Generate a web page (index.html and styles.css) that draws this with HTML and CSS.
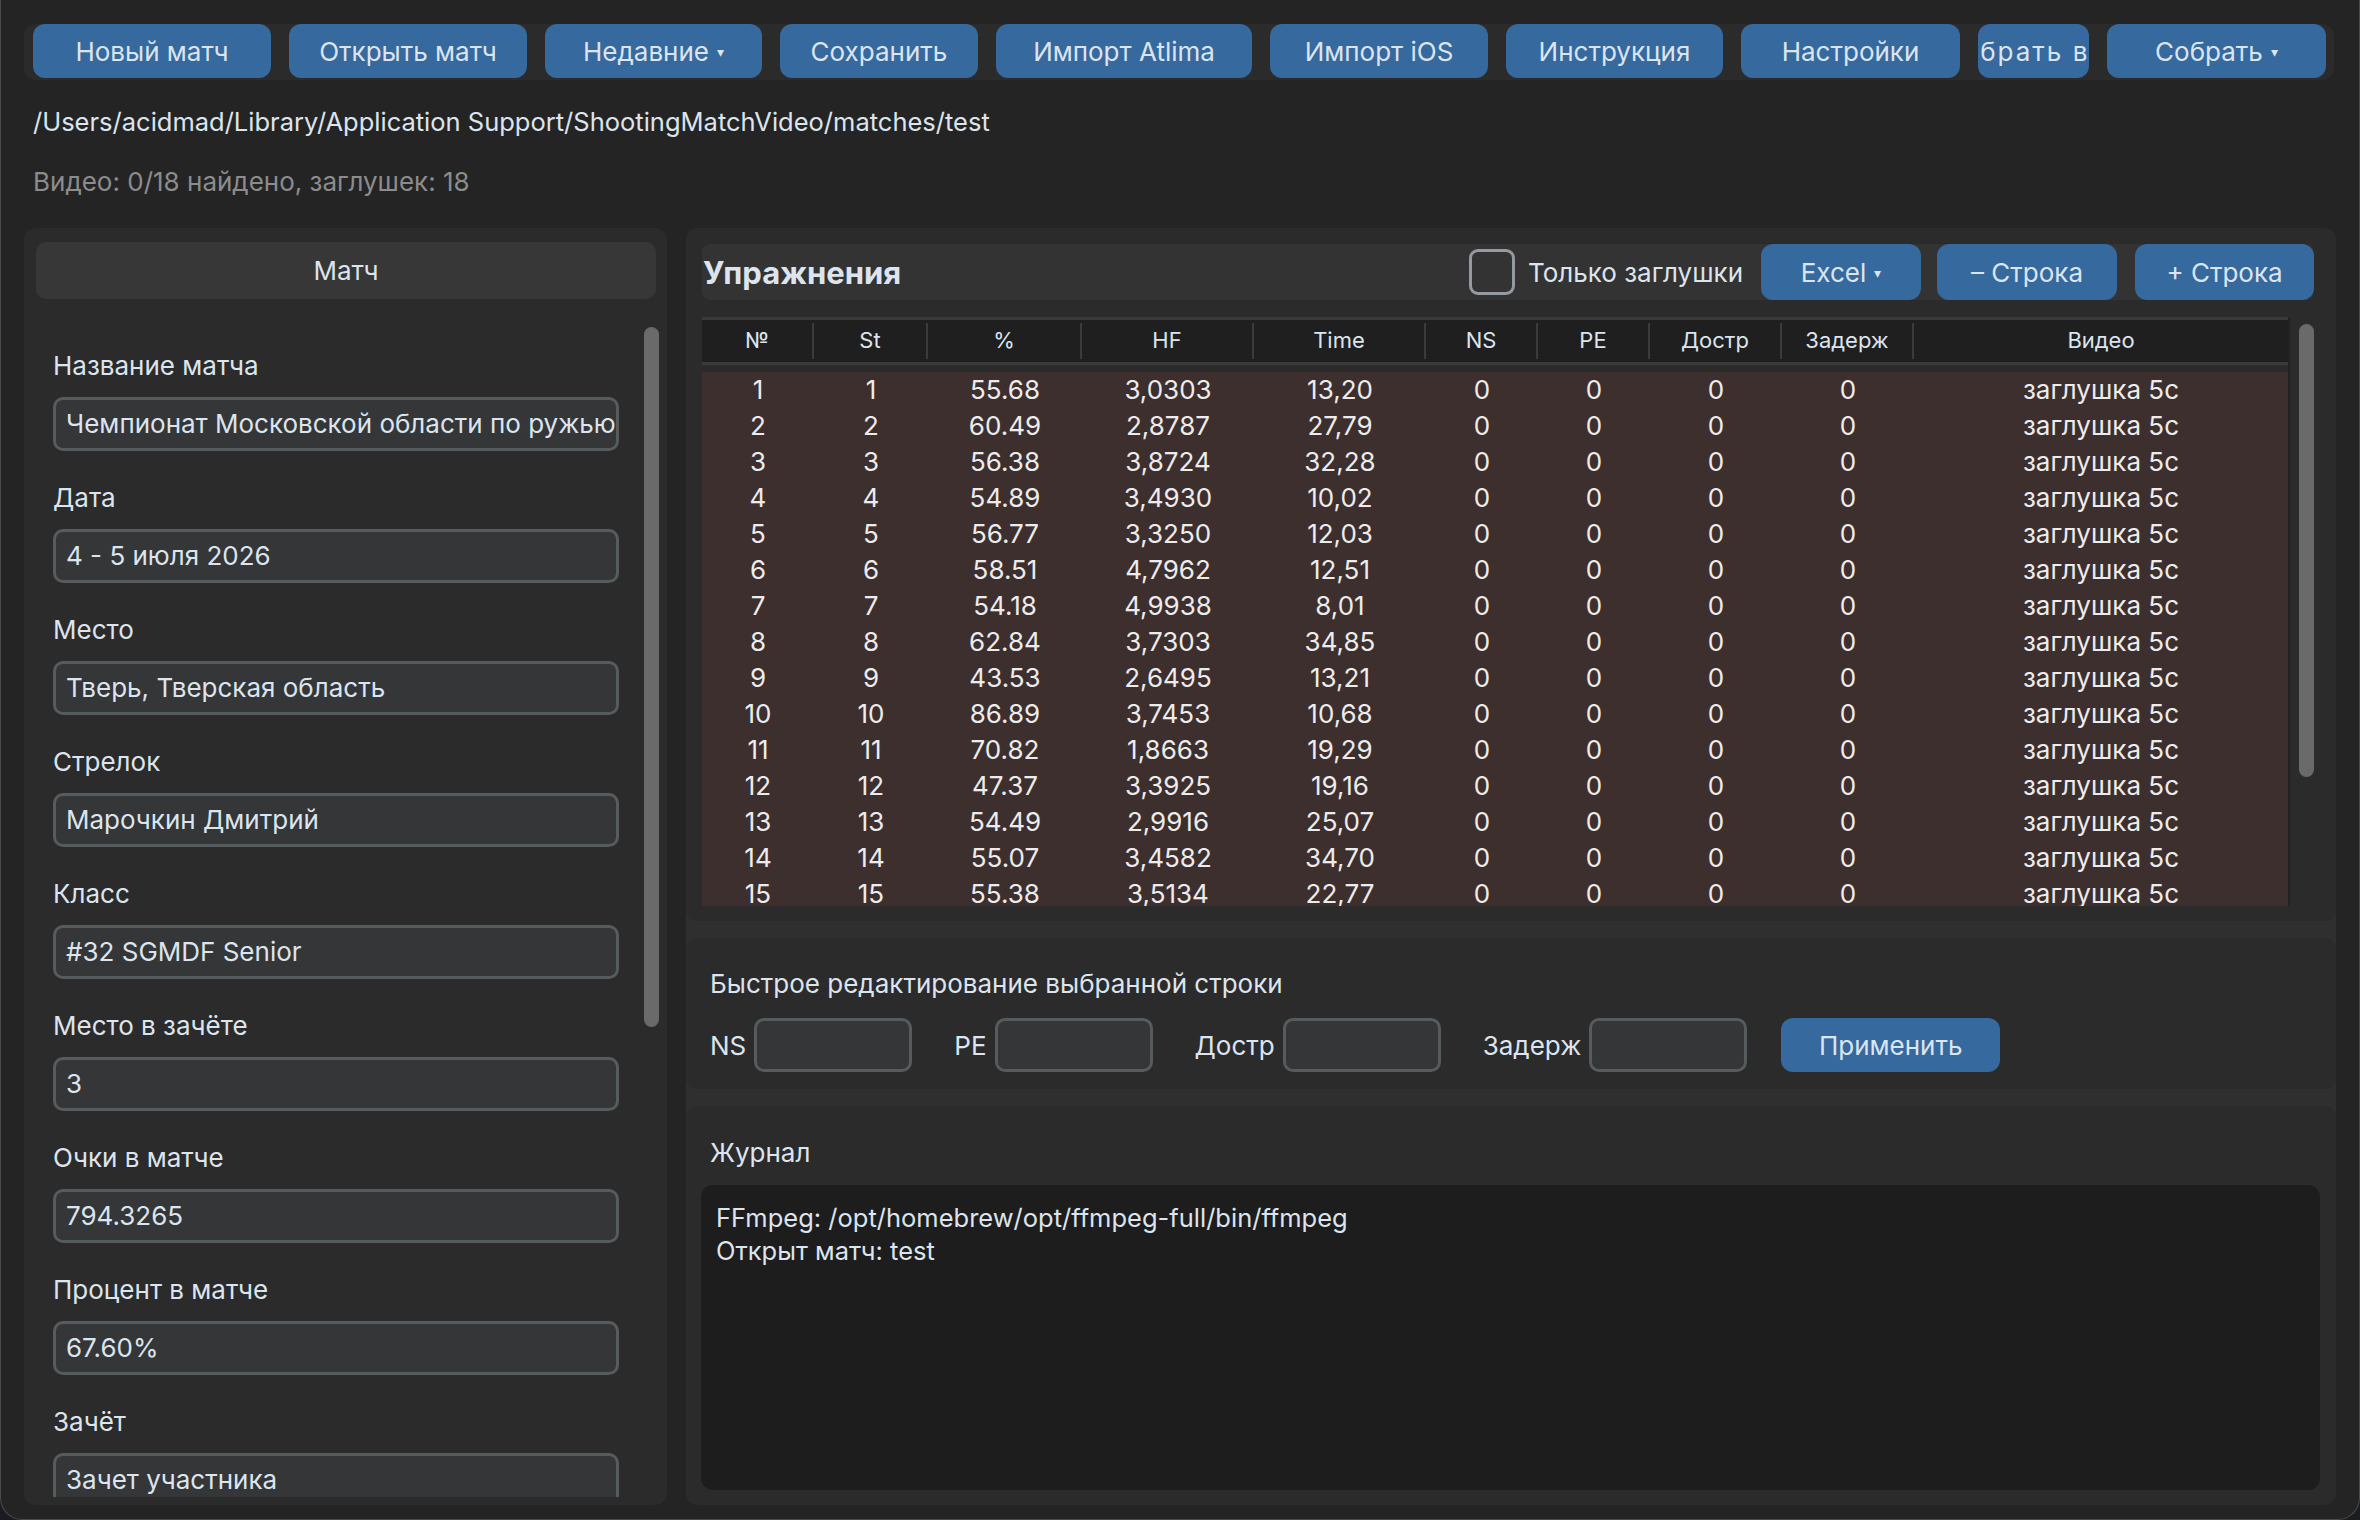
FILE: index.html
```html
<!DOCTYPE html>
<html lang="ru">
<head>
  <meta charset="UTF-8">
  <title>ShootingMatchVideo</title>
  <link rel="stylesheet" href="styles.css">
</head>
<body>
  <div class="window">
    <div class="toolbar">
      <button class="btn">Новый матч</button>
      <button class="btn">Открыть матч</button>
      <button class="btn">Недавние <span class="caret">▾</span></button>
      <button class="btn">Сохранить</button>
      <button class="btn">Импорт Atlima</button>
      <button class="btn">Импорт iOS</button>
      <button class="btn">Инструкция</button>
      <button class="btn">Настройки</button>
      <button class="btn btn-clip"><span>Выбрать видео</span></button>
      <button class="btn">Собрать <span class="caret">▾</span></button>
    </div>

    <div class="path">/Users/acidmad/Library/Application Support/ShootingMatchVideo/matches/test</div>
    <div class="status">Видео: 0/18 найдено, заглушек: 18</div>

    <div class="main">
      <!-- match info -->
      <div class="left-panel">
        <div class="panel-title">Матч</div>
        <div class="form-scroll">
          <div class="form-fields">
            <div class="field">
              <label>Название матча</label>
              <div class="input">Чемпионат Московской области по ружью</div>
            </div>
            <div class="field">
              <label>Дата</label>
              <div class="input">4 - 5 июля 2026</div>
            </div>
            <div class="field">
              <label>Место</label>
              <div class="input">Тверь, Тверская область</div>
            </div>
            <div class="field">
              <label>Стрелок</label>
              <div class="input">Марочкин Дмитрий</div>
            </div>
            <div class="field">
              <label>Класс</label>
              <div class="input">#32 SGMDF Senior</div>
            </div>
            <div class="field">
              <label>Место в зачёте</label>
              <div class="input">3</div>
            </div>
            <div class="field">
              <label>Очки в матче</label>
              <div class="input">794.3265</div>
            </div>
            <div class="field">
              <label>Процент в матче</label>
              <div class="input">67.60%</div>
            </div>
            <div class="field">
              <label>Зачёт</label>
              <div class="input">Зачет участника</div>
            </div>
          </div>
          <div class="scroll-thumb left-thumb"></div>
        </div>
      </div>

      <div class="right-col">
        <!-- exercises table -->
        <div class="section exercises">
          <div class="ex-head">
            <h2>Упражнения</h2>
            <div class="only-stubs">
              <span class="checkbox"></span>
              <span>Только заглушки</span>
            </div>
            <button class="btn btn-excel">Excel <span class="caret">▾</span></button>
            <button class="btn btn-del">– Строка</button>
            <button class="btn btn-add">+ Строка</button>
          </div>

          <div class="table-wrap">
            <div class="table">
              <div class="row thead">
                <div>№</div><div>St</div><div>%</div><div>HF</div><div>Time</div>
                <div>NS</div><div>PE</div><div>Достр</div><div>Задерж</div><div>Видео</div>
              </div>
              <div class="tbody">
                <div class="row"><div>1</div><div>1</div><div>55.68</div><div>3,0303</div><div>13,20</div><div>0</div><div>0</div><div>0</div><div>0</div><div>заглушка 5с</div></div>
                <div class="row"><div>2</div><div>2</div><div>60.49</div><div>2,8787</div><div>27,79</div><div>0</div><div>0</div><div>0</div><div>0</div><div>заглушка 5с</div></div>
                <div class="row"><div>3</div><div>3</div><div>56.38</div><div>3,8724</div><div>32,28</div><div>0</div><div>0</div><div>0</div><div>0</div><div>заглушка 5с</div></div>
                <div class="row"><div>4</div><div>4</div><div>54.89</div><div>3,4930</div><div>10,02</div><div>0</div><div>0</div><div>0</div><div>0</div><div>заглушка 5с</div></div>
                <div class="row"><div>5</div><div>5</div><div>56.77</div><div>3,3250</div><div>12,03</div><div>0</div><div>0</div><div>0</div><div>0</div><div>заглушка 5с</div></div>
                <div class="row"><div>6</div><div>6</div><div>58.51</div><div>4,7962</div><div>12,51</div><div>0</div><div>0</div><div>0</div><div>0</div><div>заглушка 5с</div></div>
                <div class="row"><div>7</div><div>7</div><div>54.18</div><div>4,9938</div><div>8,01</div><div>0</div><div>0</div><div>0</div><div>0</div><div>заглушка 5с</div></div>
                <div class="row"><div>8</div><div>8</div><div>62.84</div><div>3,7303</div><div>34,85</div><div>0</div><div>0</div><div>0</div><div>0</div><div>заглушка 5с</div></div>
                <div class="row"><div>9</div><div>9</div><div>43.53</div><div>2,6495</div><div>13,21</div><div>0</div><div>0</div><div>0</div><div>0</div><div>заглушка 5с</div></div>
                <div class="row"><div>10</div><div>10</div><div>86.89</div><div>3,7453</div><div>10,68</div><div>0</div><div>0</div><div>0</div><div>0</div><div>заглушка 5с</div></div>
                <div class="row"><div>11</div><div>11</div><div>70.82</div><div>1,8663</div><div>19,29</div><div>0</div><div>0</div><div>0</div><div>0</div><div>заглушка 5с</div></div>
                <div class="row"><div>12</div><div>12</div><div>47.37</div><div>3,3925</div><div>19,16</div><div>0</div><div>0</div><div>0</div><div>0</div><div>заглушка 5с</div></div>
                <div class="row"><div>13</div><div>13</div><div>54.49</div><div>2,9916</div><div>25,07</div><div>0</div><div>0</div><div>0</div><div>0</div><div>заглушка 5с</div></div>
                <div class="row"><div>14</div><div>14</div><div>55.07</div><div>3,4582</div><div>34,70</div><div>0</div><div>0</div><div>0</div><div>0</div><div>заглушка 5с</div></div>
                <div class="row"><div>15</div><div>15</div><div>55.38</div><div>3,5134</div><div>22,77</div><div>0</div><div>0</div><div>0</div><div>0</div><div>заглушка 5с</div></div>
              </div>
            </div>
            <div class="table-scroll">
              <div class="scroll-thumb table-thumb"></div>
            </div>
          </div>
        </div>

        <!-- quick edit -->
        <div class="section quick">
          <div class="quick-title">Быстрое редактирование выбранной строки</div>
          <div class="quick-row">
            <span class="q-label">NS</span><div class="q-input"></div>
            <span class="q-label">PE</span><div class="q-input"></div>
            <span class="q-label">Достр</span><div class="q-input"></div>
            <span class="q-label">Задерж</span><div class="q-input"></div>
            <button class="btn btn-apply">Применить</button>
          </div>
        </div>

        <!-- log -->
        <div class="section log">
          <div class="log-title">Журнал</div>
          <div class="log-box">
            <div>FFmpeg: /opt/homebrew/opt/ffmpeg-full/bin/ffmpeg</div>
            <div>Открыт матч: test</div>
          </div>
        </div>
      </div>
    </div>
  </div>
</body>
</html>
```

FILE: styles.css
```css
/* Dark app window */
* {
  box-sizing: border-box;
}

html,
body {
  margin: 0;
  padding: 0;
  background-color: #1b1c1f;
}

body {
  font-family: Inter, "Noto Sans", sans-serif;
  font-size: 26px;
  color: #dce4ee;
}

.window {
  width: 2360px;
  height: 1520px;
  padding: 24px 25px 0 23px;
  background-color: #242424;
  border: 1px solid #4a4a4a;
  border-top: none;
  border-radius: 0 0 22px 22px;
  overflow: hidden;
}

.btn {
  display: flex;
  align-items: center;
  justify-content: center;
  height: 54px;
  padding: 0;
  border: none;
  border-radius: 12px;
  background-color: #36699e;
  color: #dce4ee;
  font-family: inherit;
  font-size: 26px;
  white-space: nowrap;
  overflow: hidden;
}

.caret {
  font-size: 14px;
  margin-left: 8px;
}

/* label wider than the button: only the middle shows */
.btn-clip {
  justify-content: flex-start;
}

.btn-clip span {
  margin-left: -38px;
  letter-spacing: 2px;
}

.toolbar {
  display: grid;
  grid-template-columns: 238px 238px 217px 198px 256px 218px 217px 219px 111px 219px;
  column-gap: 18px;
  height: 56px;
  padding: 0 7px 0 9px;
  background-color: #2b2b2b;
  border-radius: 12px;
}

.path {
  margin-top: 26px;
  padding-left: 9px;
  line-height: 32px;
  font-size: 25.5px;
}

.status {
  margin-top: 28px;
  padding-left: 9px;
  line-height: 32px;
  color: #8c8c8c;
}

.main {
  display: flex;
  gap: 19px;
  height: 1277px;
  margin-top: 30px;
}

/* left panel */
.left-panel {
  display: flex;
  flex-direction: column;
  width: 643px;
  flex: none;
  padding: 14px 8px 8px 12px;
  background-color: #2b2b2b;
  border-radius: 12px;
}

.panel-title {
  height: 57px;
  margin-right: 3px;
  line-height: 57px;
  text-align: center;
  background-color: #373737;
  border-radius: 10px;
}

.form-scroll {
  display: flex;
  flex: 1;
  margin-top: 10px;
  overflow: hidden;
}

.form-fields {
  flex: 1;
  padding: 41px 0 0 17px;
}

.field label {
  display: block;
  line-height: 32px;
  margin-bottom: 15px;
}

.input {
  width: 566px;
  height: 54px;
  margin-bottom: 31px;
  padding: 0 10px;
  line-height: 48px;
  background-color: #343638;
  border: 3px solid #565b5e;
  border-radius: 10px;
  white-space: nowrap;
  overflow: hidden;
}

.scroll-thumb {
  width: 15px;
  flex: none;
  background-color: #6a6a6a;
  border-radius: 8px;
}

.left-thumb {
  height: 700px;
  margin-top: 18px;
}

/* right column */
.right-col {
  display: flex;
  flex-direction: column;
  flex: 1;
  gap: 17px;
  background-color: #2f2f2f;
  border-radius: 12px;
}

.section {
  background-color: #2b2b2b;
  border-radius: 12px;
}

.exercises {
  height: 693px;
  padding: 16px 22px 0 16px;
}

.ex-head {
  display: flex;
  align-items: center;
  height: 56px;
  padding-left: 1px;
  background-color: #333333;
  border-radius: 8px;
}

.ex-head h2 {
  margin: 0;
  font-size: 31px;
  font-weight: 700;
}

.only-stubs {
  display: flex;
  align-items: center;
  gap: 13px;
  margin-left: auto;
  margin-right: 18px;
}

.checkbox {
  width: 46px;
  height: 46px;
  border: 3px solid #949a9f;
  border-radius: 9px;
}

.ex-head .btn {
  height: 56px;
}

.btn-excel {
  width: 160px;
  margin-right: 16px;
}

.btn-del {
  width: 180px;
  margin-right: 18px;
}

.btn-add {
  width: 179px;
}

.table-wrap {
  display: flex;
  height: 589px;
  margin-top: 17px;
}

.table {
  width: 1586px;
  flex: none;
}

.row {
  display: grid;
  grid-template-columns: 112px 114px 154px 172px 172px 112px 112px 132px 132px 374px;
  height: 36px;
  line-height: 36px;
  text-align: center;
  color: #ececec;
}

.row div {
  white-space: nowrap;
}

.thead {
  height: 48px;
  line-height: 34px;
  font-size: 22px;
  color: #dce4ee;
  background-color: #1f1f1f;
  border-top: 3px solid #3a3a3a;
  border-bottom: 3px solid #3a3a3a;
}

.thead div {
  margin: 3px 0;
  border-right: 2px solid #3b3b3b;
}

.thead div:last-child {
  border-right: none;
}

.tbody {
  height: 534px;
  margin-top: 7px;
  background-color: #3e2f2f;
  overflow: hidden;
}

.table-scroll {
  flex: 1;
  padding-left: 9px;
  border-left: 2px solid #222222;
}

.table-thumb {
  height: 453px;
  margin-top: 7px;
}

/* quick edit */
.quick {
  height: 151px;
  padding: 30px 0 0 24px;
}

.quick-title {
  line-height: 32px;
}

.quick-row {
  display: flex;
  align-items: center;
  height: 54px;
  margin-top: 18px;
}

.q-label {
  margin-right: 8px;
}

.q-input {
  width: 158px;
  height: 54px;
  margin-right: 42px;
  background-color: #343638;
  border: 3px solid #565b5e;
  border-radius: 10px;
}

.btn-apply {
  width: 219px;
  margin-left: -8px;
}

/* log */
.log {
  display: flex;
  flex-direction: column;
  flex: 1;
  padding: 31px 16px 15px 15px;
}

.log-title {
  margin-left: 9px;
  margin-bottom: 16px;
  line-height: 32px;
}

.log-box {
  flex: 1;
  padding: 16px 15px 13px;
  line-height: 33px;
  font-size: 25.5px;
  background-color: #1d1d1d;
  border-radius: 12px;
}
```
